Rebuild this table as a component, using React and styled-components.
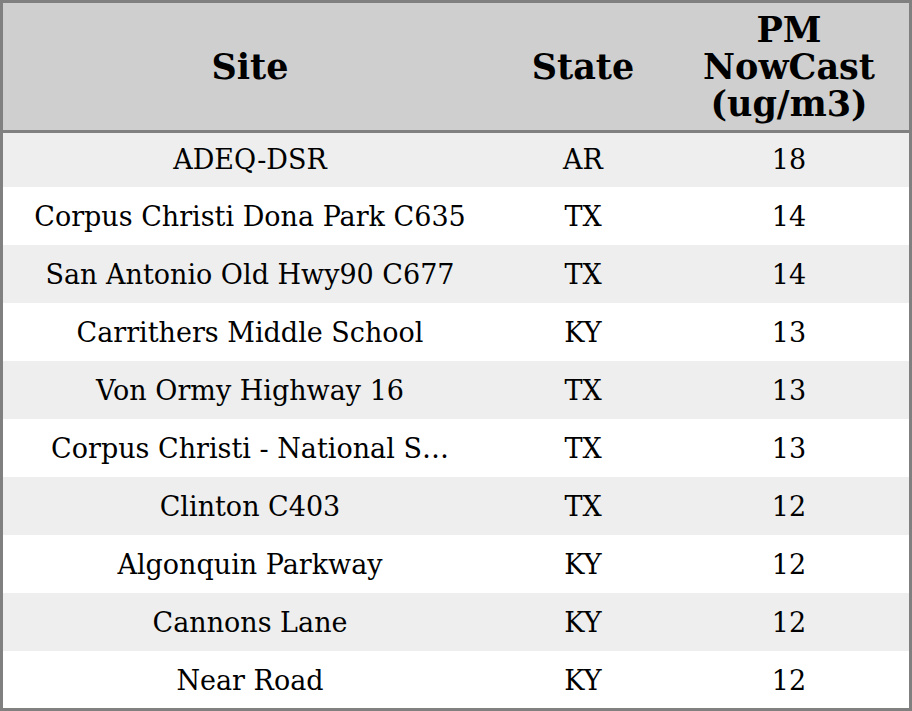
import styled, { createGlobalStyle } from "styled-components";

const rows = [
  { site: "ADEQ-DSR", state: "AR", pm: 18 },
  { site: "Corpus Christi Dona Park C635", state: "TX", pm: 14 },
  { site: "San Antonio Old Hwy90 C677", state: "TX", pm: 14 },
  { site: "Carrithers Middle School", state: "KY", pm: 13 },
  { site: "Von Ormy Highway 16", state: "TX", pm: 13 },
  { site: "Corpus Christi - National S…", state: "TX", pm: 13 },
  { site: "Clinton C403", state: "TX", pm: 12 },
  { site: "Algonquin Parkway", state: "KY", pm: 12 },
  { site: "Cannons Lane", state: "KY", pm: 12 },
  { site: "Near Road", state: "KY", pm: 12 },
];

const GlobalStyle = createGlobalStyle`
  body {
    margin: 0;
    font-family: "DejaVu Serif", serif;
    color: #000;
    background: #fff;
  }
`;

const Frame = styled.div`
  box-sizing: border-box;
  width: 912px;
  height: 711px;
  border: 3px solid #808080;
  overflow: hidden;
`;

const Table = styled.table`
  width: 906px;
  border-collapse: collapse;
  table-layout: fixed;
`;

const HeadRow = styled.tr`
  height: 128px;
  background: #cfcfcf;
  border-bottom: 3px solid #808080;
`;

const Th = styled.th`
  width: ${(p) => p.$w}px;
  padding: 0;
  font-size: 35px;
  font-weight: bold;
  text-align: center;
  vertical-align: middle;
  line-height: 37px;
`;

const Row = styled.tr`
  height: ${(p) => (p.$first ? 56 : 58)}px;
  background: ${(p) => (p.$striped ? "#eeeeee" : "#ffffff")};
`;

const Td = styled.td`
  padding: 0;
  font-size: 27px;
  text-align: center;
  vertical-align: middle;
  white-space: nowrap;
  overflow: hidden;
`;

export default function App() {
  return (
    <>
      <GlobalStyle />
      <Frame>
        <Table>
          <thead>
            <HeadRow>
              <Th $w={494}>Site</Th>
              <Th $w={172}>State</Th>
              <Th $w={240}>
                PM
                <br />
                NowCast
                <br />
                (ug/m3)
              </Th>
            </HeadRow>
          </thead>
          <tbody>
            {rows.map((r, i) => (
              <Row key={i} $first={i === 0} $striped={i % 2 === 0}>
                <Td>{r.site}</Td>
                <Td>{r.state}</Td>
                <Td>{r.pm}</Td>
              </Row>
            ))}
          </tbody>
        </Table>
      </Frame>
    </>
  );
}
